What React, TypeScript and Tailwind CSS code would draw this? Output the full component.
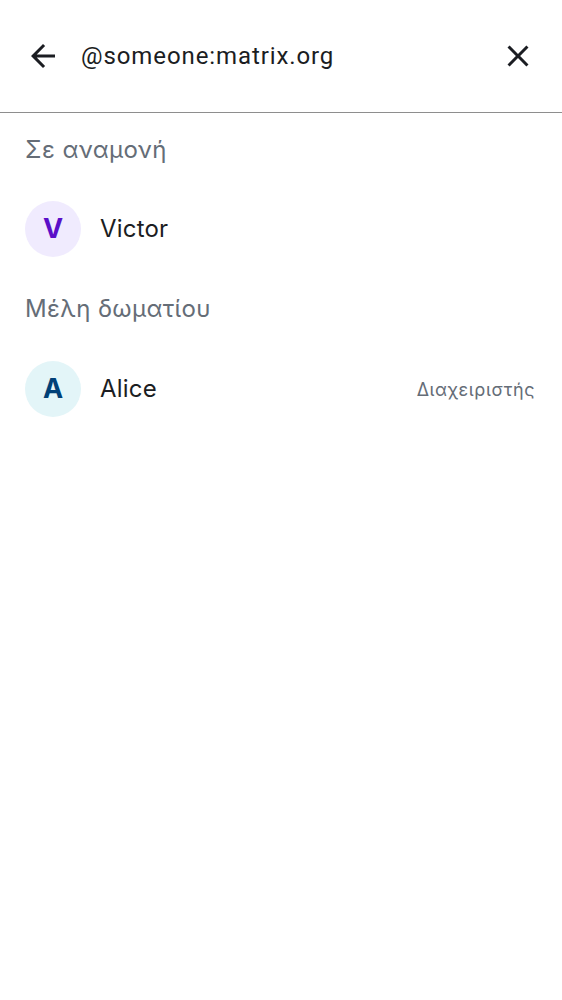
import React from "react";

function BackIcon() {
  return (
    <svg width="36" height="36" viewBox="0 0 24 24" fill="#1b1d22">
      <path d="M20 11H7.83l5.59-5.59L12 4l-8 8 8 8 1.41-1.41L7.83 13H20v-2z" />
    </svg>
  );
}

function CloseIcon() {
  return (
    <svg width="36" height="36" viewBox="0 0 24 24" fill="#1b1d22">
      <path d="M19 6.41 17.59 5 12 10.59 6.41 5 5 6.41 10.59 12 5 17.59 6.41 19 12 13.41 17.59 19 19 17.59 13.41 12z" />
    </svg>
  );
}

function Member({ letter, name, bg, fg, role }: { letter: string; name: string; bg: string; fg: string; role?: string }) {
  return (
    <div className="flex items-center h-[84px] pl-[25px] pr-[27px]">
      <div className={`w-[56px] h-[56px] rounded-full flex items-center justify-center text-[27px] font-bold ${bg} ${fg}`}>
        {letter}
      </div>
      <div className="ml-[19px] flex-1 text-[24px] tracking-[0.2px] text-[#1b1d22]">{name}</div>
      {role && <div className="text-[18px] tracking-[0.6px] text-[#656d77]">{role}</div>}
    </div>
  );
}

export default function App() {
  return (
    <div className="w-[562px] h-[1000px] bg-white" style={{ fontFamily: "Inter, 'Noto Sans', sans-serif" }}>
      <div className="h-[113px] flex items-center border-b border-[#8e8e8e]">
        <div className="w-[81px] pl-[25px] flex items-center">
          <BackIcon />
        </div>
        <div className="flex-1 text-[24px] tracking-[0.9px] text-[#1b1d22]" style={{ fontFamily: "Roboto, sans-serif" }}>
          @someone:matrix.org
        </div>
        <div className="pr-[26px] flex items-center">
          <CloseIcon />
        </div>
      </div>
      <div className="h-[74px] flex items-center px-[25px] text-[24px] tracking-[0.4px] text-[#656d77]">Σε αναμονή</div>
      <Member letter="V" name="Victor" bg="bg-[#f0ebfe]" fg="text-[#5a0fc8]" />
      <div className="h-[76px] flex items-center px-[25px] text-[24px] tracking-[0.4px] text-[#656d77]">Μέλη δωματίου</div>
      <Member letter="A" name="Alice" bg="bg-[#e3f5f8]" fg="text-[#004077]" role="Διαχειριστής" />
    </div>
  );
}
